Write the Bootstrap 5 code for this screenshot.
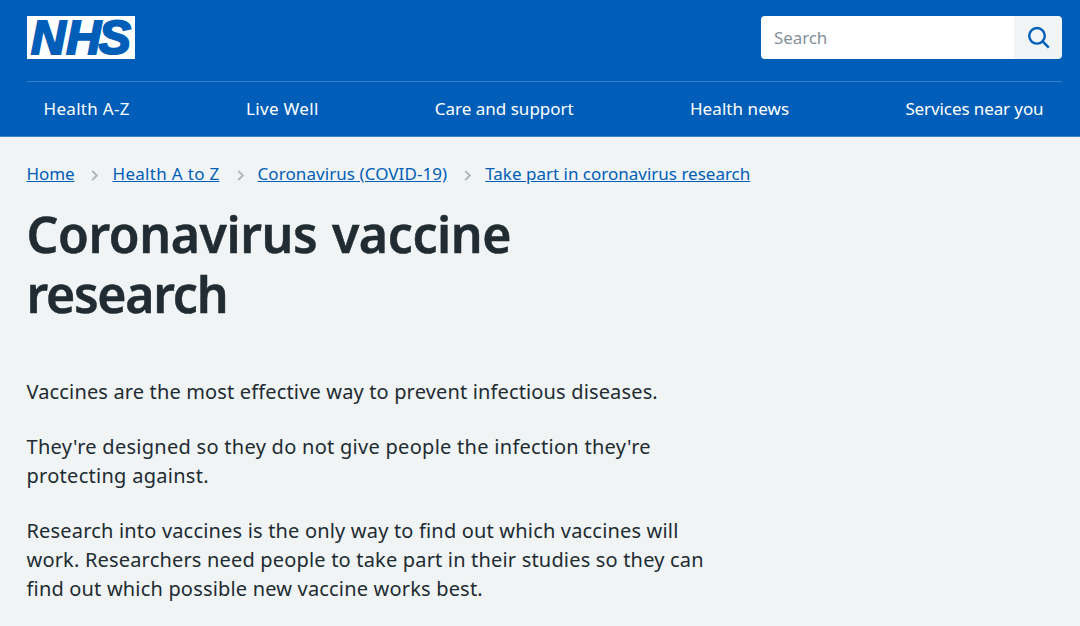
<!DOCTYPE html>
<html lang="en">
<head>
  <meta charset="UTF-8" />
  <meta name="viewport" content="width=device-width, initial-scale=1.0" />
  <title>Coronavirus vaccine research - NHS</title>
  <link href="https://cdn.jsdelivr.net/npm/bootstrap@5.3.2/dist/css/bootstrap.min.css" rel="stylesheet" />
  <style>
    body {
      background-color: #f0f4f5;
      color: #212b32;
      font-family: "Noto Sans", "Open Sans", sans-serif;
      overflow: hidden;
    }

    .page-width {
      padding: 0 18.5px 0 26.5px;
    }

    .site-header {
      background-color: #005eb8;
      height: 137px;
      border-bottom: 1px solid #3f84c9;
    }

    .header-top {
      height: 81px;
      padding-top: 16px;
    }

    .nhs-logo {
      width: 108px;
      height: 43px;
      margin-left: .5px;
      overflow: visible;
      font-family: "Liberation Sans", Arial, sans-serif;
    }

    .site-search {
      width: 300.5px;
      height: 43px;
    }

    .site-search .form-control {
      border: 0;
      border-radius: 4px 0 0 4px;
      padding: 0 13px;
      font-size: 17px;
      letter-spacing: -.1px;
    }

    .site-search .form-control::placeholder {
      color: #84919a;
    }

    .site-search .btn {
      width: 47.5px;
      background-color: #f0f4f5;
      border: 0;
      border-radius: 0 4px 4px 0;
    }

    .site-nav {
      border-top: 1px solid #337ec6;
      padding: 0 18px 0 17px;
      height: 55px;
    }

    .site-nav .nav-link {
      color: #fff;
      font-size: 17px;
      line-height: 24px;
      padding: 0;
      white-space: nowrap;
    }

    .crumbs {
      padding-top: 24px;
      font-size: 17px;
      line-height: 26px;
    }

    .crumbs a {
      color: #005eb8;
      white-space: nowrap;
    }

    .crumbs svg {
      flex: none;
      margin: 2px 14px 0 17px;
    }

    .track-in { letter-spacing: -.1px; }
    .track-slight { letter-spacing: .07px; }
    .track-out { letter-spacing: .31px; }

    h1 {
      font-size: 50px;
      font-weight: 600;
      line-height: 60px;
      letter-spacing: -.4px;
      word-spacing: 2px;
      margin: 17px 0 53px;
      -webkit-text-stroke: .5px #212b32;
    }

    h1 span {
      letter-spacing: -1.25px;
    }

    .body-copy p {
      font-size: 20px;
      line-height: 29.2px;
      letter-spacing: .18px;
      margin-bottom: 25.6px;
      white-space: nowrap;
    }

    .body-copy .intro {
      letter-spacing: .15px;
    }

    .body-copy .track-out {
      letter-spacing: .28px;
    }
  </style>
</head>
<body>

  <header class="site-header">
    <div class="page-width">
      <div class="header-top d-flex justify-content-between align-items-start">
        <a href="#" class="d-block lh-1" aria-label="NHS homepage">
          <svg class="nhs-logo d-block" viewBox="0 0 108 43">
            <rect width="108" height="43" fill="#fff" />
            <text x="4 39.2 71.8" y="38.3" font-size="48" font-weight="700" font-style="italic" fill="#005eb8" stroke="#005eb8" stroke-width="2.2">NHS</text>
          </svg>
        </a>
        <form class="site-search input-group flex-nowrap">
          <input type="search" class="form-control" placeholder="Search" aria-label="Search" />
          <button type="button" class="btn d-flex align-items-center justify-content-center p-0" aria-label="Submit search">
            <svg width="24" height="24" viewBox="0 0 24 24" fill="none" stroke="#005eb8" stroke-width="2.4">
              <circle cx="11" cy="9.8" r="7.8" />
              <path d="M16.6 15.4L22.8 21.6" />
            </svg>
          </button>
        </form>
      </div>
      <nav class="site-nav nav d-flex justify-content-between align-items-center flex-nowrap">
        <a class="nav-link track-out" href="#">Health A-Z</a>
        <a class="nav-link track-out" href="#">Live Well</a>
        <a class="nav-link" href="#">Care and support</a>
        <a class="nav-link track-slight" href="#">Health news</a>
        <a class="nav-link track-in" href="#">Services near you</a>
      </nav>
    </div>
  </header>

  <main class="page-width">
    <nav class="crumbs d-flex align-items-center" aria-label="breadcrumb">
      <a href="#" class="track-in">Home</a>
      <svg width="7" height="11" viewBox="0 0 7 11" fill="none" stroke="#aeb7bd" stroke-width="1.9"><path d="M1.2 .8L5.8 5.5L1.2 10.2" /></svg>
      <a href="#" class="track-out">Health A to Z</a>
      <svg width="7" height="11" viewBox="0 0 7 11" fill="none" stroke="#aeb7bd" stroke-width="1.9"><path d="M1.2 .8L5.8 5.5L1.2 10.2" /></svg>
      <a href="#" class="track-slight">Coronavirus (COVID-19)</a>
      <svg width="7" height="11" viewBox="0 0 7 11" fill="none" stroke="#aeb7bd" stroke-width="1.9"><path d="M1.2 .8L5.8 5.5L1.2 10.2" /></svg>
      <a href="#">Take part in coronavirus research</a>
    </nav>
    <h1>Coronavirus vaccine<br /><span>research</span></h1>
    <div class="body-copy">
      <p class="intro">Vaccines are the most effective way to prevent infectious diseases.</p>
      <p class="track-out">They're designed so they do not give people the infection they're<br />protecting against.</p>
      <p>Research into vaccines is the only way to find out which vaccines will<br />work. Researchers need people to take part in their studies so they can<br />find out which possible new vaccine works best.</p>
    </div>
  </main>
  <script src="https://cdn.jsdelivr.net/npm/bootstrap@5.3.2/dist/js/bootstrap.bundle.min.js"></script>
</body>
</html>
